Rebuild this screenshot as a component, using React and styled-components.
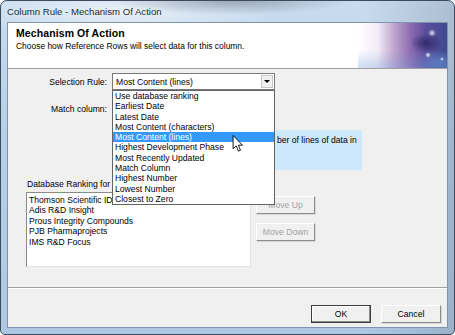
import React from 'react';
import styled, { createGlobalStyle } from 'styled-components';

const rules = [
  'Use database ranking',
  'Earliest Date',
  'Latest Date',
  'Most Content (characters)',
  'Most Content (lines)',
  'Highest Development Phase',
  'Most Recently Updated',
  'Match Column',
  'Highest Number',
  'Lowest Number',
  'Closest to Zero',
];

const databases = [
  'Thomson Scientific IDdb',
  'Adis R&D Insight',
  'Prous Integrity Compounds',
  'PJB Pharmaprojects',
  'IMS R&D Focus',
];

const GlobalStyle = createGlobalStyle`
  html, body {
    margin: 0;
    padding: 0;
    background: #fff;
  }
  * { box-sizing: border-box; }
`;

const Window = styled.div`
  width: 455px;
  height: 335px;
  border: 1px solid #3c4a5c;
  border-radius: 7px 7px 5px 5px;
  padding: 0 6px 6px 6px;
  display: flex;
  flex-direction: column;
  overflow: hidden;
  background:
    radial-gradient(ellipse 120px 14px at 230px 0px, rgba(90, 100, 115, 0.45), rgba(90, 100, 115, 0) 100%),
    radial-gradient(ellipse 160px 30px at 120px 10px, rgba(255, 255, 255, 0.55), rgba(255, 255, 255, 0) 100%),
    linear-gradient(to right, rgba(255,255,255,0) 80%, rgba(120,135,155,0.35) 100%),
    linear-gradient(to bottom, #c9dcef 0%, #b7cfe8 40%, #aec8e4 100%);
  font-family: "Liberation Sans", Arial, sans-serif;
  color: #000;
`;

const TitleBar = styled.div`
  height: 21px;
  display: flex;
  align-items: center;
  font-size: 9.6px;
  color: #1e2a38;
  text-shadow: 0 0 6px rgba(255, 255, 255, 0.9);
`;

const Client = styled.div`
  flex: 1;
  display: flex;
  flex-direction: column;
  background: #f0f0f0;
  border: 1px solid #7f93ad;
`;

const Header = styled.div`
  height: 46px;
  display: flex;
  background: #fff;
  border-bottom: 1px solid #a0a0a0;
`;

const HeaderText = styled.div`
  flex: 1;
  padding: 4px 0 0 8px;
`;

const HeaderTitle = styled.div`
  font-size: 10.5px;
  font-weight: bold;
  letter-spacing: 0.1px;
  line-height: 12px;
`;

const HeaderSub = styled.div`
  margin-top: 2px;
  font-size: 8.45px;
  line-height: 11px;
`;

const HeaderArt = styled.div`
  width: 89px;
  background:
    radial-gradient(circle 3px at 70px 32px, rgba(255,255,255,0.9), rgba(255,255,255,0) 100%),
    radial-gradient(circle 4px at 74px 10px, rgba(255,255,255,0.8), rgba(255,255,255,0) 100%),
    radial-gradient(circle 2px at 84px 36px, rgba(255,255,255,0.9), rgba(255,255,255,0) 100%),
    radial-gradient(ellipse 16px 10px at 68px 20px, rgba(40,35,95,0.8), rgba(40,35,95,0) 100%),
    radial-gradient(ellipse 20px 12px at 80px 40px, rgba(90,130,200,0.8), rgba(90,130,200,0) 100%),
    linear-gradient(to bottom, rgba(255,255,255,0) 60%, rgba(120,160,220,0.35) 100%),
    linear-gradient(to right, #ffffff 0%, #f3ecf6 22%, #bca0cc 42%, #8a6aae 60%, #5b4e9c 76%, #3f4b8e 100%);
`;

const Body = styled.div`
  flex: 1;
  display: flex;
  flex-direction: column;
`;

const FieldRow = styled.div`
  display: grid;
  grid-template-columns: 100px 163px;
  column-gap: 4px;
  align-items: center;
  margin-top: ${p => p.top}px;
  height: 17px;
`;

const Label = styled.div`
  font-size: 8.6px;
  text-align: right;
  white-space: nowrap;
  padding-right: 1px;
`;

const Combo = styled.div`
  position: relative;
  height: 17px;
  display: flex;
  align-items: center;
  background: #fff;
  border: 1px solid #7a7a7a;
  font-size: 8.6px;
  padding-left: 3px;
`;

const ComboText = styled.div`
  flex: 1;
  white-space: nowrap;
`;

const ArrowButton = styled.div`
  width: 12px;
  height: 13px;
  margin-right: 1px;
  background: #f0f0f0;
  border: 1px solid #c8c8c8;
  display: flex;
  align-items: center;
  justify-content: center;
  &::after {
    content: '';
    border-left: 3px solid transparent;
    border-right: 3px solid transparent;
    border-top: 3px solid #000;
  }
`;

const DropList = styled.div`
  position: absolute;
  top: 16px;
  left: -1px;
  width: 163px;
  background: #fff;
  border: 1px solid #646464;
  z-index: 10;
`;

const DropItem = styled.div`
  height: 10.3px;
  line-height: 10.3px;
  font-size: 8.6px;
  padding-left: 2px;
  white-space: nowrap;
  background: ${p => (p.selected ? '#3399ff' : 'transparent')};
  color: ${p => (p.selected ? '#fff' : '#000')};
`;

const InfoPanel = styled.div`
  margin: 13px 0 0 104px;
  width: 250px;
  height: 40px;
  background: #cce8fa;
  border-radius: 2px;
  padding: 5px 0 0 165px;
  font-size: 8.6px;
  line-height: 10px;
  white-space: nowrap;
`;

const SectionLabel = styled.div`
  margin: 9px 0 0 19px;
  height: 10px;
  line-height: 10px;
  font-size: 8.6px;
  white-space: nowrap;
`;

const RankArea = styled.div`
  display: flex;
  gap: 5px;
  margin: 3px 0 0 18px;
`;

const ListBox = styled.div`
  width: 225px;
  height: 75px;
  background: #fff;
  border: 1px solid;
  border-color: #8a8a8a #e4e4e4 #e4e4e4 #8a8a8a;
  padding: 2px 0 0 2px;
`;

const ListItem = styled.div`
  height: 10.4px;
  line-height: 10.4px;
  font-size: 8.6px;
  white-space: nowrap;
`;

const ButtonColumn = styled.div`
  display: flex;
  flex-direction: column;
  gap: 9px;
  padding-top: 4px;
`;

const Button = styled.div`
  width: ${p => p.w || 60}px;
  height: 18px;
  display: flex;
  align-items: center;
  justify-content: center;
  font-size: 8.6px;
  background: #f0f0f0;
  color: ${p => (p.disabled ? '#a3a3a3' : '#000')};
  border: 1px solid;
  border-color: ${p => (p.primary ? '#3c3c3c' : '#fff #8c8c8c #8c8c8c #fff')};
  box-shadow: ${p => (p.primary ? 'inset -1px -1px 0 #8c8c8c, inset 1px 1px 0 #fff' : '1px 1px 0 #d8d8d8')};
`;

const Footer = styled.div`
  height: 40px;
  border-top: 1px solid #a0a0a0;
  box-shadow: inset 0 1px 0 #fff;
  display: flex;
  justify-content: flex-end;
  gap: 10px;
  padding: 17px 6px 0 0;
`;

const Cursor = styled.svg`
  position: absolute;
  left: 232px;
  top: 135px;
  z-index: 20;
`;

const Stage = styled.div`
  position: relative;
  width: 455px;
  height: 335px;
`;

export default function App() {
  return (
    <Stage>
      <GlobalStyle />
      <Window>
        <TitleBar>Column Rule - Mechanism Of Action</TitleBar>
        <Client>
          <Header>
            <HeaderText>
              <HeaderTitle>Mechanism Of Action</HeaderTitle>
              <HeaderSub>Choose how Reference Rows will select data for this column.</HeaderSub>
            </HeaderText>
            <HeaderArt />
          </Header>
          <Body>
            <FieldRow top={4}>
              <Label>Selection Rule:</Label>
              <Combo>
                <ComboText>Most Content (lines)</ComboText>
                <ArrowButton />
                <DropList>
                  {rules.map(r => (
                    <DropItem key={r} selected={r === 'Most Content (lines)'}>{r}</DropItem>
                  ))}
                </DropList>
              </Combo>
            </FieldRow>
            <FieldRow top={10}>
              <Label>Match column:</Label>
              <Combo>
                <ComboText />
                <ArrowButton />
              </Combo>
            </FieldRow>
            <InfoPanel>ber of lines of data in</InfoPanel>
            <SectionLabel>Database Ranking for</SectionLabel>
            <RankArea>
              <ListBox>
                {databases.map(d => (
                  <ListItem key={d}>{d}</ListItem>
                ))}
              </ListBox>
              <ButtonColumn>
                <Button w={59} disabled>Move Up</Button>
                <Button w={59} disabled>Move Down</Button>
              </ButtonColumn>
            </RankArea>
          </Body>
          <Footer>
            <Button primary>OK</Button>
            <Button>Cancel</Button>
          </Footer>
        </Client>
      </Window>
      <Cursor width="12" height="17" viewBox="0 0 12 19">
        <path d="M0.5 0.5 L0.5 15.5 L4 12.2 L6.5 18 L8.8 17 L6.4 11.4 L11 11.4 Z" fill="#fff" stroke="#000" strokeWidth="1" strokeLinejoin="miter" />
      </Cursor>
    </Stage>
  );
}
